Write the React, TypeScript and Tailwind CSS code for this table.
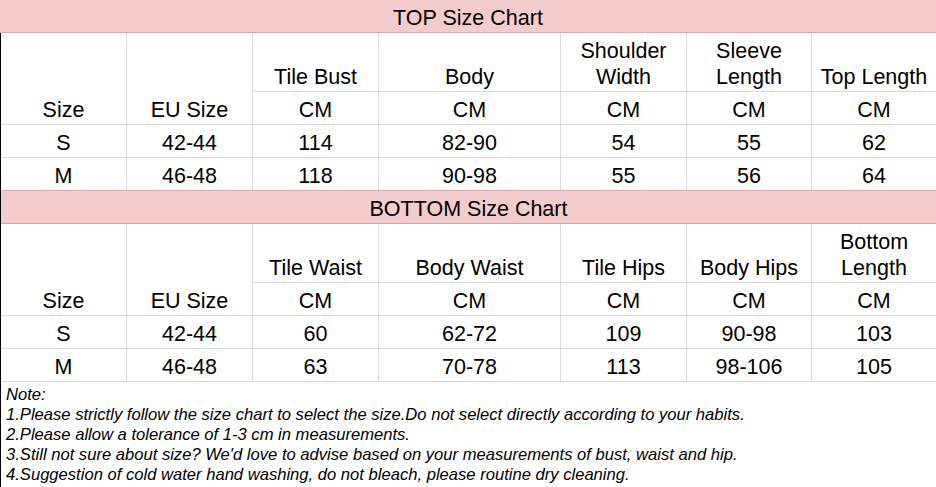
import React from "react";

type Head = { label: React.ReactNode; span?: boolean };

const topHeads: Head[] = [
  { label: "Size", span: true },
  { label: "EU Size", span: true },
  { label: "Tile Bust" },
  { label: "Body" },
  { label: <>Shoulder<br />Width</> },
  { label: <>Sleeve<br />Length</> },
  { label: "Top Length" },
];

const bottomHeads: Head[] = [
  { label: "Size", span: true },
  { label: "EU Size", span: true },
  { label: "Tile Waist" },
  { label: "Body Waist" },
  { label: "Tile Hips" },
  { label: "Body Hips" },
  { label: <>Bottom<br />Length</> },
];

const topRows = [
  ["S", "42-44", "114", "82-90", "54", "55", "62"],
  ["M", "46-48", "118", "90-98", "55", "56", "64"],
];
const bottomRows = [
  ["S", "42-44", "60", "62-72", "109", "90-98", "103"],
  ["M", "46-48", "63", "70-78", "113", "98-106", "105"],
];

function Cell({
  children,
  last,
  noBottom,
  className = "",
}: {
  children: React.ReactNode;
  last?: boolean;
  noBottom?: boolean;
  className?: string;
}) {
  return (
    <div
      className={
        "flex items-end justify-center text-center leading-[26px] pb-[1px] border-[#dadada] " +
        (last ? "" : "border-r ") +
        (noBottom ? "" : "border-b ") +
        className
      }
    >
      <span>{children}</span>
    </div>
  );
}

function Table({
  heads,
  rows,
  lastRowBorder,
}: {
  heads: Head[];
  rows: string[][];
  lastRowBorder: boolean;
}) {
  return (
    <div
      className={
        "grid grid-cols-[126px_126px_126px_182px_126px_125px_124px] " +
        (lastRowBorder
          ? "grid-rows-[59px_33px_33px_33px]"
          : "grid-rows-[59px_33px_33px_32px]")
      }
    >
      {heads.map((h, i) => (
        <Cell key={"h" + i} last={i === 6} className={h.span ? "row-span-2" : ""}>
          {h.label}
        </Cell>
      ))}
      {heads.map((h, i) =>
        h.span ? null : (
          <Cell key={"c" + i} last={i === 6}>
            CM
          </Cell>
        )
      )}
      {rows.map((r, ri) =>
        r.map((v, i) => (
          <Cell
            key={ri + "-" + i}
            last={i === 6}
            noBottom={!lastRowBorder && ri === rows.length - 1}
          >
            {v}
          </Cell>
        ))
      )}
    </div>
  );
}

export default function App() {
  return (
    <div className="w-[936px] h-[487px] bg-white text-black font-['Liberation_Sans',Arial,sans-serif] text-[21.5px] overflow-hidden">
      <div className="h-[33px] bg-[#f4cccc] border-b border-[#dea8a8] flex items-end justify-center leading-[26px] pb-[1px]">
        TOP Size Chart
      </div>
      <div className="border-l border-black h-[454px]">
        <Table heads={topHeads} rows={topRows} lastRowBorder={false} />
        <div className="h-[34px] bg-[#f4cccc] border-y border-[#dea8a8] flex items-end justify-center leading-[26px] pb-[1px]">
          BOTTOM Size Chart
        </div>
        <Table heads={bottomHeads} rows={bottomRows} lastRowBorder={true} />
        <div className="pl-[5px] pt-[3px] text-[16.6px] leading-[20px] italic">
          <div>Note:</div>
          <div>1.Please strictly follow the size chart to select the size.Do not select directly according to your habits.</div>
          <div>2.Please allow a tolerance of 1-3 cm in measurements.</div>
          <div>3.Still not sure about size? We'd love to advise based on your measurements of bust, waist and hip.</div>
          <div>4.Suggestion of cold water hand washing, do not bleach, please routine dry cleaning.</div>
        </div>
      </div>
    </div>
  );
}
